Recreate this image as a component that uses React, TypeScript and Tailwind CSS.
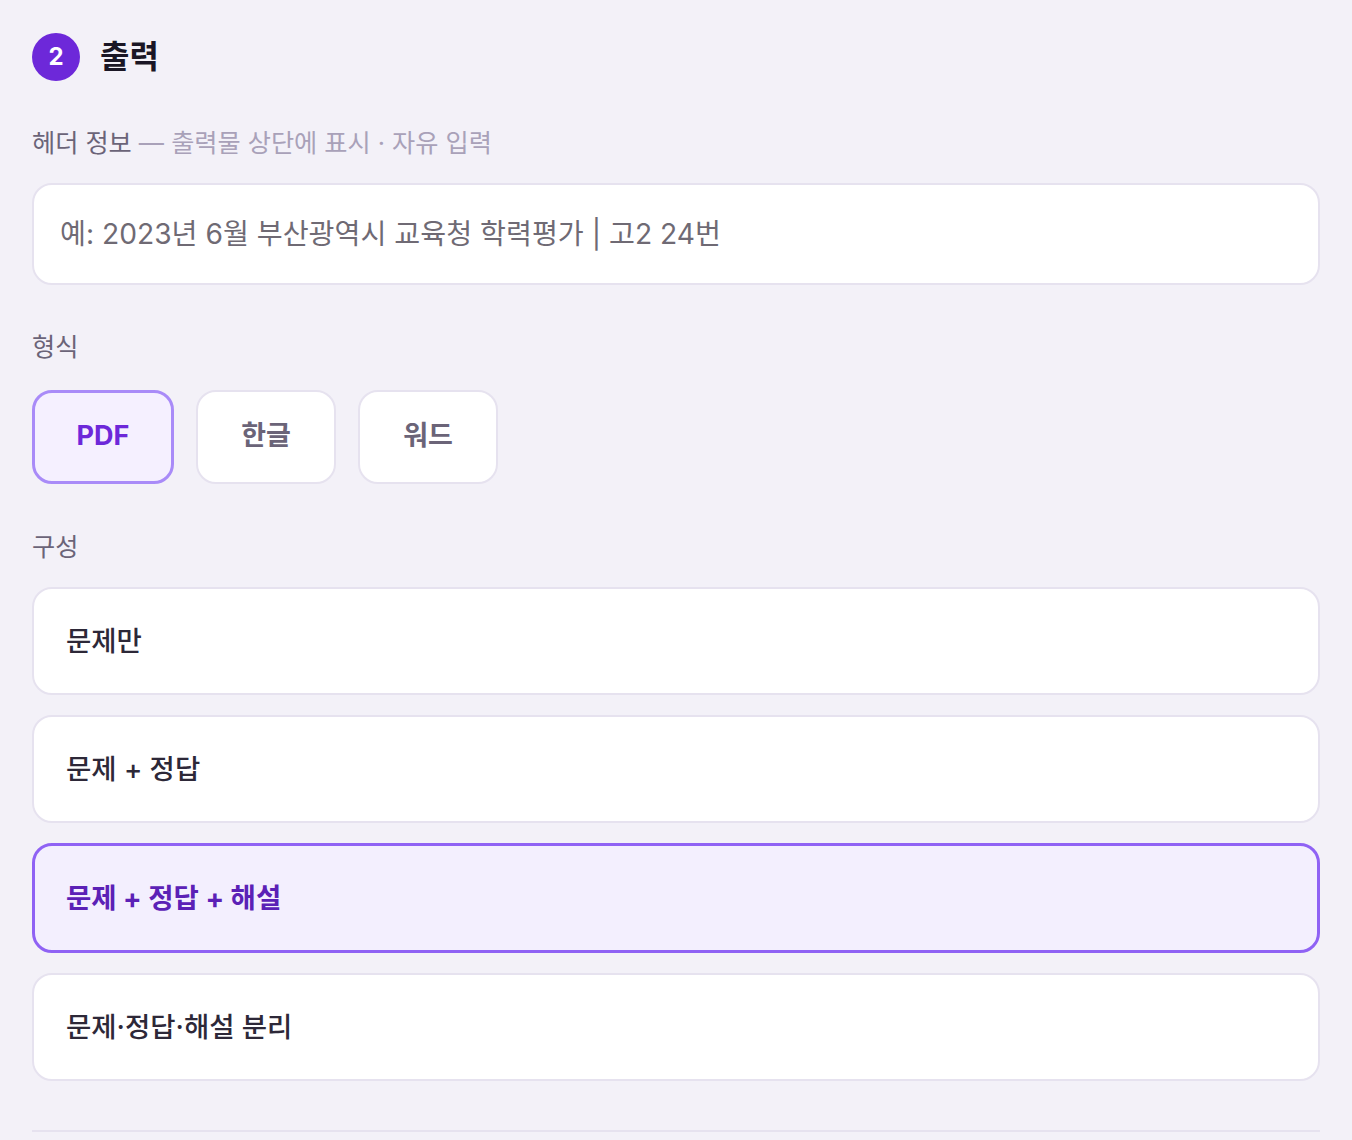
import { useState } from 'react';

const FORMATS = ['PDF', '한글', '워드'];
const LAYOUTS = ['문제만', '문제 + 정답', '문제 + 정답 + 해설', '문제·정답·해설 분리'];

export default function App() {
  const [format, setFormat] = useState('PDF');
  const [layout, setLayout] = useState('문제 + 정답 + 해설');
  const [header, setHeader] = useState('');

  return (
    <div
      className="min-h-[1140px] bg-[#f3f1f8] px-8 pt-[33px]"
      style={{ fontFamily: "Inter, 'Noto Sans CJK KR', sans-serif" }}
    >
      {/* Section title */}
      <div className="flex items-center gap-5">
        <div className="flex h-12 w-12 items-center justify-center rounded-full bg-[#6d28d9] text-[24px] font-bold text-white">
          2
        </div>
        <h2 className="text-[32px] font-bold text-[#1a1625]">출력</h2>
      </div>

      {/* Header info */}
      <label className="mt-[44px] block text-[25.2px] text-[#6b6478]">
        헤더 정보 <span className="text-[#a9a1b9]">— 출력물 상단에 표시 · 자유 입력</span>
      </label>
      <input
        value={header}
        onChange={(e) => setHeader(e.target.value)}
        placeholder="예: 2023년 6월 부산광역시 교육청 학력평가 | 고2 24번"
        className="mt-[20px] h-[102px] w-full rounded-[20px] border-2 border-[#e6e2ef] bg-white px-[26px] text-[28.2px] text-[#2d2838] outline-none placeholder:text-[#6f6a74]"
      />

      {/* Format */}
      <div className="mt-[44px] text-[25.2px] text-[#6b6478]">형식</div>
      <div className="mt-[23px] flex gap-[22px]">
        {FORMATS.map((f) => {
          const active = f === format;
          return (
            <button
              key={f}
              type="button"
              onClick={() => setFormat(f)}
              className={
                active
                  ? 'h-[94px] w-[142px] rounded-[20px] border-[3px] border-[#a98bf8] bg-[#f5f0ff] text-[27px] font-bold text-[#6d28d9]'
                  : 'h-[94px] w-[140px] rounded-[20px] border-2 border-[#e6e2ef] bg-white text-[27px] font-semibold text-[#6b6478]'
              }
            >
              {f}
            </button>
          );
        })}
      </div>

      {/* Layout */}
      <div className="mt-[45px] text-[25.2px] text-[#6b6478]">구성</div>
      <div className="mt-[21px] flex flex-col gap-5">
        {LAYOUTS.map((l) => {
          const active = l === layout;
          return (
            <button
              key={l}
              type="button"
              onClick={() => setLayout(l)}
              className={
                active
                  ? 'h-[110px] w-full rounded-[20px] border-[3px] border-[#8f62f4] bg-[#f3effe] px-[31px] text-left text-[27.5px] font-bold text-[#5b21b6]'
                  : 'h-[108px] w-full rounded-[20px] border-2 border-[#e6e2ef] bg-white px-[32px] text-left text-[27.5px] font-medium text-[#2d2838]'
              }
            >
              {l}
            </button>
          );
        })}
      </div>

      <div className="mt-[49px] h-[2px] bg-[#e6e2ef]" />
    </div>
  );
}
